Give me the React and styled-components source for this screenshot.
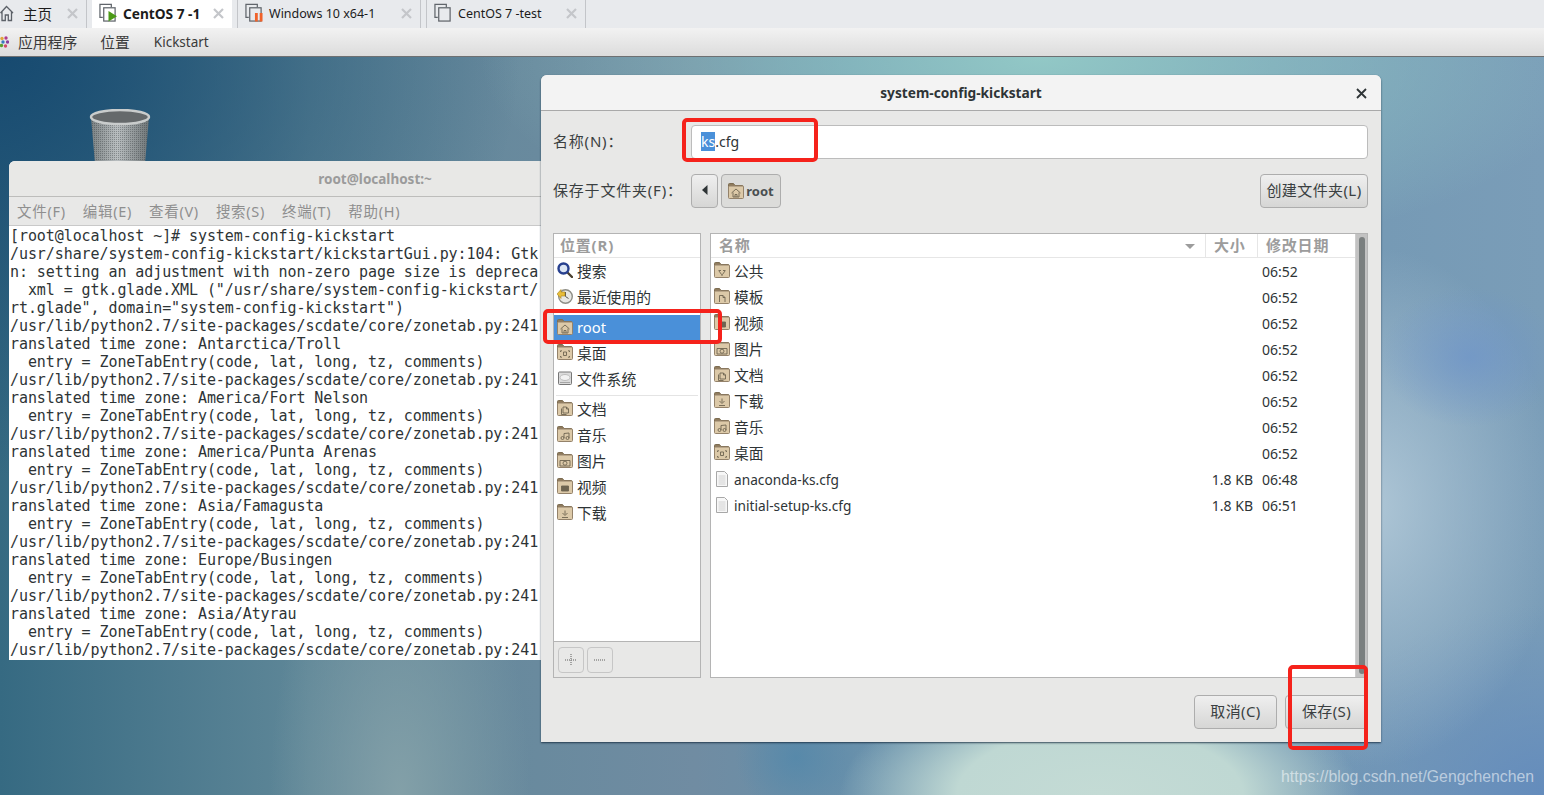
import styled, { createGlobalStyle } from "styled-components";

const Global = createGlobalStyle`
  html, body {
    margin: 0;
    padding: 0;
    height: 100%;
    overflow: hidden;
  }
  * {
    box-sizing: border-box;
  }
  body {
    font-family: "Noto Sans", "Noto Sans CJK SC", sans-serif;
  }
`;

const Page = styled.div`
  width: 1544px;
  height: 795px;
  display: flex;
  flex-direction: column;
  overflow: hidden;
`;

/* vmware tabs */
const TabStrip = styled.div`
  height: 28px;
  flex-shrink: 0;
  display: flex;
  gap: 5px;
  background: #e8eaed;
`;

const Tab = styled.div`
  width: ${(p) => p.$width}px;
  display: flex;
  align-items: center;
  gap: 6px;
  padding: 0 8px 2px 7px;
  font-size: ${(p) => (p.$active ? 13.7 : 12.5)}px;
  color: #1c1c1c;
  white-space: nowrap;
  font-weight: ${(p) => (p.$active ? 700 : 400)};
  background: ${(p) => (p.$active ? "#fff" : "transparent")};
  border-left: ${(p) => (p.$active ? "none" : "1px solid #c3c5c9")};
  border-right: ${(p) => (p.$active ? "none" : "1px solid #c3c5c9")};
`;

const HomeTab = styled(Tab)`
  padding-left: 0;
  gap: 9px;
  border-left: none;
  font-size: 14.6px;
`;

const TabClose = styled.span`
  margin-left: auto;
  width: 11px;
  height: 11px;
  display: flex;
`;

const MenuBar = styled.div`
  height: 29px;
  flex-shrink: 0;
  display: flex;
  align-items: center;
  background: linear-gradient(#f2f2f2, #dcdcdc);
  border-bottom: 1px solid #6e7072;
  color: #3a3a3a;
`;

const MenuItem = styled.span`
  margin-left: ${(p) => p.$gap}px;
  padding-bottom: ${(p) => (p.$small ? 0 : 2)}px;
  font-size: ${(p) => (p.$small ? 13.5 : 14.8)}px;
`;

/* gnome desktop */
const Desktop = styled.div`
  position: relative;
  flex: 1;
  overflow: hidden;
  background:
    radial-gradient(ellipse 260px 120px at 1100px 738px, #c4dbd5 0%, #bfd8d3 55%, rgba(190, 215, 210, 0) 100%),
    radial-gradient(ellipse 60px 60px at 796px 700px, rgba(84, 136, 170, 0.85), rgba(84, 136, 170, 0)),
    radial-gradient(ellipse 90px 70px at 1470px 300px, rgba(112, 150, 200, 0.8), rgba(112, 150, 200, 0)),
    radial-gradient(ellipse 190px 260px at 1370px 450px, #aec6d6 0%, rgba(170, 195, 215, 0) 100%),
    radial-gradient(ellipse 240px 190px at 1544px 738px, #648cbc 0%, rgba(100, 140, 188, 0) 100%),
    radial-gradient(ellipse 560px 210px at 1040px 0px, #92c8c6 0%, rgba(146, 200, 198, 0) 100%),
    radial-gradient(ellipse 520px 420px at 0px 0px, #174a70 0%, rgba(23, 74, 112, 0) 100%),
    radial-gradient(ellipse 130px 300px at 400px 738px, #83a0a8 0%, rgba(131, 160, 168, 0) 100%),
    linear-gradient(90deg, #366a82 0%, #5f8798 20%, #708ca2 45%, #6890ab 55%, #7a9db8 100%);
`;

const Trash = styled.svg`
  position: absolute;
  left: 88px;
  top: 52px;
`;

const Watermark = styled.div`
  position: absolute;
  right: 10px;
  bottom: 9px;
  font-family: "Liberation Sans", sans-serif;
  font-size: 15.8px;
  color: rgba(255, 255, 255, 0.55);
`;

/* terminal window */
const Terminal = styled.div`
  position: absolute;
  left: 9px;
  top: 104px;
  width: 732px;
  height: 499px;
  display: flex;
  flex-direction: column;
  border-radius: 6px 6px 0 0;
  overflow: hidden;
  background: #fff;
`;

const TermTitle = styled.div`
  height: 36px;
  flex-shrink: 0;
  display: flex;
  align-items: center;
  justify-content: center;
  background: #e8e8e6;
  border-bottom: 1px solid #bdbdbb;
  font-size: 13.5px;
  font-weight: 700;
  color: #9b9b9b;
`;

const TermMenu = styled.div`
  height: 29px;
  flex-shrink: 0;
  display: flex;
  align-items: center;
  gap: 17px;
  padding: 0 0 2px 8px;
  background: #e8e8e7;
  border-bottom: 1px solid #c9c9c9;
  font-size: 14.5px;
  letter-spacing: 0.7px;
  color: #8f8f8f;
`;

const TermText = styled.pre`
  margin: 0;
  padding: 1px 0 0 1px;
  font-family: "DejaVu Sans Mono", monospace;
  font-size: 15px;
  letter-spacing: -0.08px;
  line-height: 18px;
  color: #2e3436;
  overflow: hidden;
`;

/* save dialog */
const Dialog = styled.div`
  position: absolute;
  left: 541px;
  top: 18px;
  width: 840px;
  height: 667px;
  display: flex;
  flex-direction: column;
  border-radius: 6px 6px 0 0;
  background: #e8e8e7;
  box-shadow: 0 1px 2px rgba(20, 40, 60, 0.8);
`;

const DialogTitle = styled.div`
  position: relative;
  height: 36px;
  flex-shrink: 0;
  display: flex;
  align-items: center;
  justify-content: center;
  background: #f3f3f3;
  border-radius: 6px 6px 0 0;
  border-bottom: 1px solid #a9a9a9;
  font-size: 13.7px;
  font-weight: 700;
  color: #2e3436;
`;

const CloseBtn = styled.span`
  position: absolute;
  right: 14px;
  top: 13px;
  display: flex;
`;

const DialogBody = styled.div`
  flex: 1;
  display: flex;
  flex-direction: column;
  padding: 14px 13px 0 12px;
`;

const FormRow = styled.div`
  display: grid;
  grid-template-columns: 138px 1fr;
  align-items: center;
  margin-bottom: ${(p) => p.$mb}px;
  font-size: 15px;
  color: #3a3f41;
`;

const FormLabel = styled.span`
  padding-bottom: 3px;
  letter-spacing: 0.8px;
`;

const NameInput = styled.div`
  height: 34px;
  display: flex;
  align-items: center;
  padding: 0 0 2px 9px;
  background: #fff;
  border: 1px solid #bcbcbc;
  border-radius: 4px;
  font-size: 14px;
  color: #2e3436;
`;

const Selected = styled.span`
  background: #4a90d9;
  color: #fff;
`;

const FolderRow = styled.div`
  display: flex;
  align-items: center;
  gap: 3px;
`;

const Button = styled.div`
  height: ${(p) => p.$h || 34}px;
  width: ${(p) => (p.$w ? `${p.$w}px` : "auto")};
  display: flex;
  align-items: center;
  justify-content: center;
  gap: 2px;
  padding-bottom: 3px;
  background: linear-gradient(#efefef, #d6d6d5);
  border: 1px solid #adadad;
  border-radius: 4px;
  font-size: 15px;
  letter-spacing: 0.4px;
  color: #3a3f41;
`;

const PushRight = styled(Button)`
  margin-left: auto;
`;

const CrumbActive = styled(Button)`
  background: #dcdcda;
  padding-bottom: 0;
  font-size: 13px;
  letter-spacing: 0;
  font-weight: 700;
  color: #4a4f51;
`;

const SmallBtn = styled(Button)`
  padding-bottom: 0;
  background: #e8e8e7;
  border-color: #c6c6c6;
`;

const Panes = styled.div`
  height: 445px;
  display: grid;
  grid-template-columns: 148px 1fr;
  gap: 9px;
`;

const Pane = styled.div`
  position: relative;
  display: flex;
  flex-direction: column;
  background: #fff;
  border: 1px solid #b4b4b4;
  overflow: hidden;
`;

const HeaderText = styled.span`
  padding-bottom: 3px;
  font-size: 15px;
  font-weight: 700;
  letter-spacing: 0.8px;
  white-space: nowrap;
  color: #9c9c9c;
`;

const SideHead = styled.div`
  height: 24px;
  flex-shrink: 0;
  display: flex;
  align-items: center;
  padding-left: 6px;
  border-bottom: 1px solid #e6e6e6;
`;

const SideList = styled.div`
  flex: 1;
  display: flex;
  flex-direction: column;
`;

const SideRow = styled.div`
  height: 26px;
  flex-shrink: 0;
  display: flex;
  align-items: center;
  gap: 4px;
  padding: 0 0 2px 3px;
  margin-top: ${(p) => (p.$selected ? 5 : 0)}px;
  margin-bottom: ${(p) => (p.$selected ? -1 : 0)}px;
  font-size: 14.8px;
  color: ${(p) => (p.$selected ? "#fff" : "#2e3436")};
  background: ${(p) => (p.$selected ? "#4a90d9" : "transparent")};
`;

const SideSep = styled.div`
  height: 1px;
  flex-shrink: 0;
  margin: 3px 2px 0;
  background: #e4e4e4;
`;

const SideTools = styled.div`
  height: 36px;
  flex-shrink: 0;
  display: flex;
  align-items: center;
  gap: 3px;
  padding-left: 4px;
  background: #e8e8e7;
  border-top: 1px solid #b4b4b4;
`;

const FileHead = styled.div`
  height: 24px;
  flex-shrink: 0;
  display: grid;
  grid-template-columns: 495px 52px 1fr;
  border-bottom: 1px solid #e6e6e6;
  margin-right: 12px;
`;

const HeadCell = styled.div`
  display: flex;
  align-items: center;
  justify-content: space-between;
  padding: 0 10px 0 8px;
  border-right: ${(p) => (p.$last ? "none" : "1px solid #e6e6e6")};
`;

const SortArrow = styled.span`
  width: 0;
  height: 0;
  border-left: 5px solid transparent;
  border-right: 5px solid transparent;
  border-top: 5px solid #9c9c9c;
`;

const FileRow = styled.div`
  height: 26px;
  display: grid;
  grid-template-columns: 495px 47px 1fr;
  align-items: center;
  margin-right: 12px;
  font-size: 14px;
  color: #2e3436;
`;

const FileName = styled.div`
  display: flex;
  align-items: center;
  gap: 4px;
  padding-left: 3px;
  padding-bottom: ${(p) => (p.$cjk ? 2 : 0)}px;
  font-size: ${(p) => (p.$cjk ? 14.8 : 13.7)}px;
`;

const FileSize = styled.div`
  text-align: right;
  font-size: 14px;
`;

const FileTime = styled.div`
  padding-left: 9px;
`;

const ScrollTrough = styled.div`
  position: absolute;
  top: 0;
  right: 0;
  bottom: 0;
  width: 12px;
  background: #c2c2c2;
  border-left: 1px solid #cdcdcd;
`;

const ScrollThumb = styled.div`
  position: absolute;
  top: 3px;
  bottom: 3px;
  left: 3px;
  width: 6px;
  border-radius: 3px;
  background: #7a7f7f;
`;

const DialogActions = styled.div`
  display: flex;
  justify-content: flex-end;
  gap: 8px;
  margin-top: 17px;
`;

/* red marks someone drew on the screenshot */
const RedBox = styled.div`
  position: absolute;
  left: ${(p) => p.$x}px;
  top: ${(p) => p.$y}px;
  width: ${(p) => p.$w}px;
  height: ${(p) => p.$h}px;
  border: 4px solid #f5221b;
  border-radius: 5px;
`;

const glyphs = {
  home: <path d="M3.500 10 8 6l4.500 4M5 9.500v4.500h6V9.500M7 14v-2.500h2V14" />,
  share: <path d="M4.500 8.500h2.500M9 8.500h2.500M5 9l2.500 3.500M11 9l-2.500 3.500M7 13h2" />,
  template: <path d="M5.500 14V7.500h3.500l2 2V14M9 7.500v2h2" />,
  video: <path d="M4.500 8h7v5h-7z" fill="#6e6450" />,
  camera: (
    <>
      <path d="M3 8.500h10v5.500H3z" />
      <circle cx="8" cy="11.200" r="2" />
    </>
  ),
  doc: <path d="M6 7h3.500l2 2v4H6zM9.500 7v2h2M4.500 8.500V14.500h5" />,
  download: <path d="M8 6.500v4M5.500 9l2.500 2.500L10.500 9M5 13.500h6" />,
  music: (
    <>
      <circle cx="5.500" cy="12" r="1.500" />
      <circle cx="10.500" cy="12" r="1.500" />
      <path d="M7 12V7.500l5-.5v5" />
    </>
  ),
  desktop: <path d="M3.500 8V6.800h1.500M11 6.800h1.500V8M12.500 12v1.200H11M5 13.200H3.500V12M6.500 8h3v3.500h-3z" />,
};

const FolderIcon = ({ kind }) => (
  <svg width="16" height="16" viewBox="0 0 16 16" style={{ flexShrink: 0 }}>
    <path d="M.5 4V1.500A1 1 0 0 1 1.500.5h4l1.500 2h7a1 1 0 0 1 1 1V4z" fill="#8f7b5c" stroke="#7d6c52" />
    <rect x=".5" y="3" width="15" height="12.500" rx="1" fill="#dcc9a8" stroke="#94826a" />
    <g fill="none" stroke="#6e6450" strokeWidth=".9">
      {glyphs[kind]}
    </g>
  </svg>
);

const DocIcon = () => (
  <svg width="16" height="16" viewBox="0 0 16 16" style={{ flexShrink: 0 }}>
    <path d="M2.500.5h8l3 3v12h-11z" fill="#f7f7f7" stroke="#a8a8a8" />
    <path d="M4.500 5h7M4.500 7h7M4.500 9h7M4.500 11h7M4.500 13h7" stroke="#d2d2d2" />
  </svg>
);

const SearchIcon = () => (
  <svg width="16" height="16" viewBox="0 0 16 16" style={{ flexShrink: 0 }}>
    <path d="M10 10l5 5" stroke="#4a4030" strokeWidth="2.400" strokeLinecap="round" />
    <circle cx="6.500" cy="6.500" r="5" fill="#dce6f5" stroke="#27408f" strokeWidth="2.400" />
  </svg>
);

const RecentIcon = () => (
  <svg width="16" height="16" viewBox="0 0 16 16" style={{ flexShrink: 0 }}>
    <circle cx="8.500" cy="8.500" r="6.800" fill="#e8e8e4" stroke="#8d8d86" strokeWidth="1.400" />
    <path d="M8.500 8.500l3 2M8.500 8.500V4" stroke="#555" />
    <path d="M0 6l4-4.500v2.500h4v4H4v2.500z" fill="#e8bd3a" stroke="#a8841c" strokeWidth=".6" />
  </svg>
);

const DiskIcon = () => (
  <svg width="16" height="16" viewBox="0 0 16 16" style={{ flexShrink: 0 }}>
    <rect x="1.500" y="2" width="13" height="12.500" rx="1" fill="#dcdcdc" stroke="#777" />
    <ellipse cx="8" cy="7.500" rx="5" ry="3" fill="#f2f2f2" stroke="#bcbcbc" />
    <path d="M3 12.500h10" stroke="#a5a5a5" />
  </svg>
);

const HomeGlyph = () => (
  <svg width="14" height="18" viewBox="0 0 14 18" style={{ flexShrink: 0 }}>
    <path d="M.5 9 6.500 2.500l6.500 6.500M2 7.500v9h3.300V11h3v5.500h3.200v-9" fill="none" stroke="#5c6168" strokeWidth="1.300" />
  </svg>
);

const VmIcon = ({ state }) => (
  <svg width="18" height="20" viewBox="0 0 19 20" style={{ flexShrink: 0 }}>
    <path d="M4 14.500H1V1h12v3" fill="none" stroke="#60656b" strokeWidth="1.300" />
    <rect x="5" y="4.500" width="12" height="14" fill="none" stroke="#60656b" strokeWidth="1.300" />
    {state === "play" && <path d="M10 8v11l9-5.500z" fill="#4b9a16" />}
    {state === "pause" && <path d="M10.500 10h3v9h-3zM15.500 10h3v9h-3z" fill="#f0622a" />}
  </svg>
);

const CloseX = ({ color = "#c4c6ca", width = 2.200 }) => (
  <svg width="11" height="11" viewBox="0 0 11 11">
    <path d="M1 1l9 9M10 1l-9 9" stroke={color} strokeWidth={width} />
  </svg>
);

const AppLogo = () => (
  <svg width="9" height="14" viewBox="0 0 9 14" style={{ flexShrink: 0 }}>
    <circle cx="2" cy="3.500" r="1.700" fill="#e0a53a" />
    <circle cx="6" cy="3" r="1.700" fill="#b03a8c" />
    <circle cx="7.500" cy="7" r="1.700" fill="#8a3fa0" />
    <circle cx="5.500" cy="11" r="1.700" fill="#d24a6a" />
    <circle cx="1.500" cy="10.500" r="1.700" fill="#5aa02c" />
    <circle cx="3" cy="7" r="1.700" fill="#3a7ac0" />
  </svg>
);

const TrashCan = () => (
  <Trash width="64" height="80" viewBox="0 0 64 80">
    <defs>
      <linearGradient id="can" x1="0" x2="1" y1="0" y2="0">
        <stop offset="0" stopColor="#7b8284" />
        <stop offset=".45" stopColor="#b9bec0" />
        <stop offset="1" stopColor="#6f7678" />
      </linearGradient>
      <pattern id="mesh" width="2" height="2" patternUnits="userSpaceOnUse">
        <rect width="1" height="1" fill="rgba(40,45,48,.35)" />
      </pattern>
    </defs>
    <path d="M3 8 9 78h46l6-70z" fill="url(#can)" />
    <path d="M3 8 9 78h46l6-70z" fill="url(#mesh)" />
    <ellipse cx="32" cy="8" rx="29" ry="7" fill="#65696b" />
    <ellipse cx="32" cy="8" rx="29" ry="7" fill="none" stroke="#c9cccc" strokeWidth="2.500" />
  </Trash>
);

const terminalLines = [
  "[root@localhost ~]# system-config-kickstart",
  "/usr/share/system-config-kickstart/kickstartGui.py:104: Gtk",
  "n: setting an adjustment with non-zero page size is depreca",
  '  xml = gtk.glade.XML ("/usr/share/system-config-kickstart/',
  'rt.glade", domain="system-config-kickstart")',
];

const zones = [
  "Antarctica/Troll",
  "America/Fort Nelson",
  "America/Punta Arenas",
  "Asia/Famagusta",
  "Europe/Busingen",
  "Asia/Atyrau",
];

const zoneLines = zones.flatMap((z) => [
  "/usr/lib/python2.7/site-packages/scdate/core/zonetab.py:241",
  `ranslated time zone: ${z}`,
  "  entry = ZoneTabEntry(code, lat, long, tz, comments)",
]);

const termOutput = [
  ...terminalLines,
  ...zoneLines,
  "/usr/lib/python2.7/site-packages/scdate/core/zonetab.py:241",
].join("\n");

const folders = [
  ["公共", "share"],
  ["模板", "template"],
  ["视频", "video"],
  ["图片", "camera"],
  ["文档", "doc"],
  ["下载", "download"],
  ["音乐", "music"],
  ["桌面", "desktop"],
];

const bookmarks = [
  ["文档", "doc"],
  ["音乐", "music"],
  ["图片", "camera"],
  ["视频", "video"],
  ["下载", "download"],
];

export default function App() {
  return (
    <Page>
      <Global />
      <TabStrip>
        <HomeTab $width={87}>
          <HomeGlyph />
          主页
          <TabClose>
            <CloseX />
          </TabClose>
        </HomeTab>
        <Tab $width={140} $active>
          <VmIcon state="play" />
          CentOS 7 -1
          <TabClose>
            <CloseX />
          </TabClose>
        </Tab>
        <Tab $width={184}>
          <VmIcon state="pause" />
          Windows 10 x64-1
          <TabClose>
            <CloseX />
          </TabClose>
        </Tab>
        <Tab $width={160}>
          <VmIcon />
          CentOS 7 -test
          <TabClose>
            <CloseX />
          </TabClose>
        </Tab>
      </TabStrip>

      <MenuBar>
        <AppLogo />
        <MenuItem $gap={9}>应用程序</MenuItem>
        <MenuItem $gap={23}>位置</MenuItem>
        <MenuItem $gap={24} $small>
          Kickstart
        </MenuItem>
      </MenuBar>

      <Desktop>
        <TrashCan />

        <Terminal>
          <TermTitle>root@localhost:~</TermTitle>
          <TermMenu>
            <span>文件(F)</span>
            <span>编辑(E)</span>
            <span>查看(V)</span>
            <span>搜索(S)</span>
            <span>终端(T)</span>
            <span>帮助(H)</span>
          </TermMenu>
          <TermText>{termOutput}</TermText>
        </Terminal>

        <Dialog>
          <DialogTitle>
            system-config-kickstart
            <CloseBtn>
              <CloseX color="#2e3436" width={1.800} />
            </CloseBtn>
          </DialogTitle>
          <DialogBody>
            <FormRow $mb={15}>
              <FormLabel>名称(N)：</FormLabel>
              <NameInput>
                <Selected>ks</Selected>.cfg
              </NameInput>
            </FormRow>
            <FormRow $mb={25}>
              <FormLabel>保存于文件夹(F)：</FormLabel>
              <FolderRow>
                <Button $w={27}>
                  <svg width="6" height="10" viewBox="0 0 6 10">
                    <path d="M5.500 0v10L0 5z" fill="#2e3436" />
                  </svg>
                </Button>
                <CrumbActive $w={60}>
                  <FolderIcon kind="home" />
                  root
                </CrumbActive>
                <PushRight $w={108}>创建文件夹(L)</PushRight>
              </FolderRow>
            </FormRow>

            <Panes>
              <Pane>
                <SideHead>
                  <HeaderText>位置(R)</HeaderText>
                </SideHead>
                <SideList>
                  <SideRow>
                    <SearchIcon />
                    搜索
                  </SideRow>
                  <SideRow>
                    <RecentIcon />
                    最近使用的
                  </SideRow>
                  <SideRow $selected>
                    <FolderIcon kind="home" />
                    root
                  </SideRow>
                  <SideRow>
                    <FolderIcon kind="desktop" />
                    桌面
                  </SideRow>
                  <SideRow>
                    <DiskIcon />
                    文件系统
                  </SideRow>
                  <SideSep />
                  {bookmarks.map(([name, kind]) => (
                    <SideRow key={name}>
                      <FolderIcon kind={kind} />
                      {name}
                    </SideRow>
                  ))}
                </SideList>
                <SideTools>
                  <SmallBtn $w={26} $h={26}>
                    <svg width="14" height="14" viewBox="0 0 14 14">
                      <path d="M7 1v12M1 7h12" stroke="#8c8c8c" strokeWidth="1.500" strokeDasharray="1 1" />
                    </svg>
                  </SmallBtn>
                  <SmallBtn $w={26} $h={26}>
                    <svg width="14" height="14" viewBox="0 0 14 14">
                      <path d="M1 7h12" stroke="#8c8c8c" strokeWidth="1.500" strokeDasharray="1 1" />
                    </svg>
                  </SmallBtn>
                </SideTools>
              </Pane>

              <Pane>
                <FileHead>
                  <HeadCell>
                    <HeaderText>名称</HeaderText>
                    <SortArrow />
                  </HeadCell>
                  <HeadCell>
                    <HeaderText>大小</HeaderText>
                  </HeadCell>
                  <HeadCell $last>
                    <HeaderText>修改日期</HeaderText>
                  </HeadCell>
                </FileHead>
                {folders.map(([name, kind]) => (
                  <FileRow key={name}>
                    <FileName $cjk>
                      <FolderIcon kind={kind} />
                      {name}
                    </FileName>
                    <FileSize />
                    <FileTime>06:52</FileTime>
                  </FileRow>
                ))}
                <FileRow>
                  <FileName>
                    <DocIcon />
                    anaconda-ks.cfg
                  </FileName>
                  <FileSize>1.8 KB</FileSize>
                  <FileTime>06:48</FileTime>
                </FileRow>
                <FileRow>
                  <FileName>
                    <DocIcon />
                    initial-setup-ks.cfg
                  </FileName>
                  <FileSize>1.8 KB</FileSize>
                  <FileTime>06:51</FileTime>
                </FileRow>
                <ScrollTrough>
                  <ScrollThumb />
                </ScrollTrough>
              </Pane>
            </Panes>

            <DialogActions>
              <Button $w={83}>取消(C)</Button>
              <Button $w={83}>保存(S)</Button>
            </DialogActions>
          </DialogBody>
        </Dialog>

        <RedBox $x={682} $y={61} $w={136} $h={44} />
        <RedBox $x={543} $y={252} $w={179} $h={35} />
        <RedBox $x={1288} $y={608} $w={80} $h={85} />

        <Watermark>https://blog.csdn.net/Gengchenchen</Watermark>
      </Desktop>
    </Page>
  );
}
